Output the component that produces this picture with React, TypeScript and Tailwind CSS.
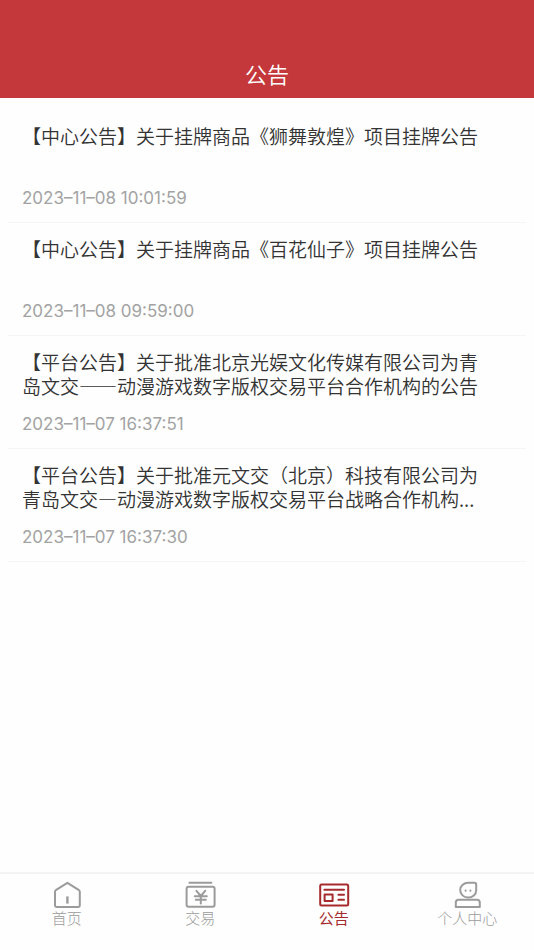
import type { ReactNode } from 'react';

interface INotice {
  id: number;
  title: string;
  date: string;
}

interface ITab {
  label: string;
  href: string;
  icon: ReactNode;
  active?: boolean;
}

const notices: INotice[] = [
  {
    id: 1,
    title: '【中心公告】关于挂牌商品《狮舞敦煌》项目挂牌公告',
    date: '2023–11–08 10:01:59',
  },
  {
    id: 2,
    title: '【中心公告】关于挂牌商品《百花仙子》项目挂牌公告',
    date: '2023–11–08 09:59:00',
  },
  {
    id: 3,
    title:
      '【平台公告】关于批准北京光娱文化传媒有限公司为青岛文交——动漫游戏数字版权交易平台合作机构的公告',
    date: '2023–11–07 16:37:51',
  },
  {
    id: 4,
    title:
      '【平台公告】关于批准元文交（北京）科技有限公司为青岛文交—动漫游戏数字版权交易平台战略合作机构...',
    date: '2023–11–07 16:37:30',
  },
];

const Icon = ({ children }: { children: ReactNode }) => (
  <svg
    className="h-7 w-8"
    viewBox="0 0 32 28"
    fill="none"
    stroke="currentColor"
    strokeWidth="2"
    strokeLinecap="round"
    strokeLinejoin="round"
    aria-hidden="true"
  >
    {children}
  </svg>
);

const tabs: ITab[] = [
  {
    label: '首页',
    href: '#home',
    icon: (
      <Icon>
        <path d="M16.4 1.8 28 9.2Q28.8 9.8 28.8 10.8V24.6Q28.8 26 27.4 26H5.4Q4 26 4 24.6V10.8Q4 9.8 4.8 9.2Z" />
        <path d="M16.4 15.4v7.2" strokeWidth="2.4" strokeLinecap="butt" />
      </Icon>
    ),
  },
  {
    label: '交易',
    href: '#trade',
    icon: (
      <Icon>
        <path d="M5.4 1.8h22" />
        <rect x="2.6" y="5.8" width="28" height="20" rx="2" />
        <path d="m12.4 9.8 4.4 5.2 4.4-5.2M16.8 15v7.6M10.8 15.2h12M11.8 18.8h10" />
      </Icon>
    ),
  },
  {
    label: '公告',
    href: '#notice',
    active: true,
    icon: (
      <Icon>
        <rect x="2.2" y="3.6" width="28" height="21" rx="1.5" />
        <path d="M6.4 8.8h19.6M20.4 13.8h5.6M20.4 18.8h5.6" />
        <rect x="6.6" y="13.4" width="8" height="6.6" />
      </Icon>
    ),
  },
  {
    label: '个人中心',
    href: '#profile',
    icon: (
      <Icon>
        <path d="M17.4 1.8h6.2q1.6 0 1.6 1.6v5.8a8 7.4 0 1 1-7.8-7.4Z" />
        <path d="M14.6 9.6v.2M19.4 9.6v.2" />
        <path d="M4.8 26v-4.4q0-2.8 2.8-2.8h18.4q2.8 0 2.8 2.8V26Z" />
      </Icon>
    ),
  },
];

const NoticeItem = ({ title, date }: INotice) => (
  <li className="border-b border-[#f5f5f5] pt-3.5 pr-8 pb-3.5 pl-3.5">
    <h2 className="min-h-12 text-[19px] leading-6 font-[350] text-[#333333]">
      {title}
    </h2>
    <time className="mt-4 block font-['Inter','Noto_Sans_CJK_SC',sans-serif] text-[17px] leading-5 text-[#a3a3a3]">
      {date}
    </time>
  </li>
);

const App = () => {
  return (
    <div
      lang="zh-CN"
      className="flex min-h-screen flex-col bg-[#fefefe] font-['Noto_Sans_CJK_SC',sans-serif]"
    >
      <header className="bg-[#c4373a] pt-[58px] pb-2.5 text-center text-white">
        <h1 className="text-[22px] leading-[30px] font-[350]">公告</h1>
      </header>

      <main className="flex-1 px-2 pt-3">
        <ul>
          {notices.map((notice) => (
            <NoticeItem key={notice.id} {...notice} />
          ))}
        </ul>
      </main>

      <nav className="sticky bottom-0 grid grid-cols-4 border-t-2 border-[#f3f3f3] bg-[#fefefe] pt-[7px] pb-[23px]">
        {tabs.map((tab) => (
          <a
            key={tab.label}
            href={tab.href}
            className={`flex flex-col items-center ${
              tab.active ? 'text-[#a52a2c]' : 'text-[#9b9b9b]'
            }`}
          >
            {tab.icon}
            <span
              className={`text-[15px] leading-[18px] ${
                tab.active ? 'font-normal' : 'font-light'
              }`}
            >
              {tab.label}
            </span>
          </a>
        ))}
      </nav>
    </div>
  );
};

export default App;
